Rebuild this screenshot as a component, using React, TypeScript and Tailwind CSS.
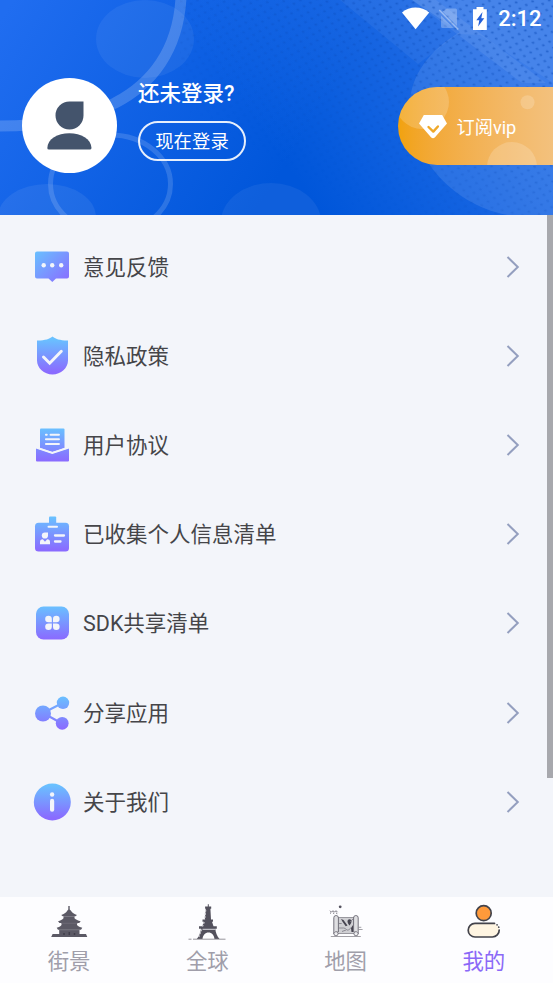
import React from "react"

const textColor = "text-[#454549]"

const Gradient = ({ id, diagonal = false }: { id: string; diagonal?: boolean }) => (
	<defs>
		<linearGradient id={id} gradientUnits="userSpaceOnUse" x1={diagonal ? 4 : 20} y1="5" x2={diagonal ? 36 : 20} y2="38">
			<stop offset="0" stopColor="#69c1ff" />
			<stop offset="1" stopColor="#8a6bff" />
		</linearGradient>
	</defs>
)

const FeedbackIcon = () => (
	<svg className="h-11 w-10" viewBox="0 0 40 44">
		<Gradient id="feedback" diagonal />
		<path d="M5 6.5h30a2 2 0 0 1 2 2v23a2 2 0 0 1-2 2H24L20.3 37 16.500 33.500H5a2 2 0 0 1-2-2v-23a2 2 0 0 1 2-2Z" fill="url(#feedback)" />
		<g fill="#f3f5fa">
			<circle cx="11.700" cy="20.200" r="2.200" />
			<circle cx="20.200" cy="20.200" r="2.200" />
			<circle cx="29.200" cy="20.200" r="2.200" />
		</g>
	</svg>
)

const PrivacyIcon = () => (
	<svg className="h-11 w-10" viewBox="0 0 40 44">
		<Gradient id="privacy" />
		<path d="M20.500 2.500C23 5 29 6.700 36 6.500v20C36 34 29 40.500 20.500 40.500S5 34 5 26.500v-20C12 6.700 18 5 20.500 2.500Z" fill="url(#privacy)" />
		<path d="m11.500 23 6.200 6.200L29.300 17.300" fill="none" stroke="#f3f5fa" strokeWidth="3" strokeLinecap="round" />
	</svg>
)

const AgreementIcon = () => (
	<svg className="h-11 w-10" viewBox="0 0 40 44">
		<Gradient id="agreement" />
		<path d="M8 6.500a1 1 0 0 1 1-1h22.500a1 1 0 0 1 1 1V25l-12.200 4L8 25Z" fill="url(#agreement)" />
		<path d="M4 25.500 20.300 31 37 25.500v12a1 1 0 0 1-1 1H5a1 1 0 0 1-1-1Z" fill="url(#agreement)" />
		<path d="M4 24.300 20.300 29.800 37 24.300" fill="none" stroke="#f3f5fa" strokeWidth="1.500" />
		<path d="M13.900 11.700h.9M18.500 11.700h8.500M13.900 16.300H27M13.900 21H27" stroke="#f3f5fa" strokeWidth="1.900" strokeLinecap="round" />
	</svg>
)

const PersonalInfoIcon = () => (
	<svg className="h-11 w-10" viewBox="0 0 40 44">
		<Gradient id="personal" />
		<rect x="17" y="4.500" width="7.200" height="12" rx="1" fill="url(#personal)" />
		<rect x="3" y="10.800" width="34" height="28.700" rx="3.500" fill="url(#personal)" />
		<path d="M16.500 14.700h8.500" stroke="#f3f5fa" strokeWidth="2" strokeLinecap="round" />
		<path d="M9.800 23.500a3.100 3.100 0 0 1 3.100-3.100H16v3.100a3.100 3.100 0 0 1-6.200 0Z" fill="#f3f5fa" />
		<path d="M8 32.300v-2.300a2.800 2.800 0 0 1 2.800-2.800l2.200 2.600 2.200-2.600A2.800 2.800 0 0 1 18 30v2.300Z" fill="#f3f5fa" />
		<path d="M23 23.500h9M23 29.500h5.500" stroke="#f3f5fa" strokeWidth="2.300" strokeLinecap="round" />
	</svg>
)

const SdkIcon = () => (
	<svg className="h-11 w-10" viewBox="0 0 40 44">
		<Gradient id="sdk" />
		<rect x="4" y="5.500" width="33" height="33" rx="7.500" fill="url(#sdk)" />
		<g fill="#f3f5fa">
			<path d="M19.800 21.300h-3.300a3.300 3.300 0 1 1 3.300-3.300Z" />
			<path d="M21 21.300V18a3.300 3.300 0 1 1 3.300 3.300Z" />
			<path d="M19.800 22.500v3.300a3.300 3.300 0 1 1-3.300-3.300Z" />
			<path d="M21 22.500h3.300a3.300 3.300 0 1 1-3.300 3.300Z" />
		</g>
	</svg>
)

const ShareIcon = () => (
	<svg className="h-11 w-10" viewBox="0 0 40 44">
		<Gradient id="share" />
		<path d="M30.500 12 11 22l19 10.500" fill="none" stroke="url(#share)" strokeWidth="2.200" />
		<g fill="url(#share)">
			<circle cx="11" cy="22.500" r="8" />
			<circle cx="31" cy="11.800" r="6.200" />
			<circle cx="30.200" cy="32.300" r="6.400" />
		</g>
	</svg>
)

const AboutIcon = () => (
	<svg className="h-11 w-10" viewBox="0 0 40 44">
		<Gradient id="about" />
		<circle cx="20.300" cy="22" r="18.500" fill="url(#about)" />
		<circle cx="20.100" cy="14.500" r="2.200" fill="#f3f5fa" />
		<path d="M20.100 20.900v8.800" stroke="#f3f5fa" strokeWidth="4.200" strokeLinecap="round" />
	</svg>
)

const StreetIcon = () => (
	<svg className="h-[38px] w-11" viewBox="0 0 44 38">
		<g fill="#5b5965">
			<path d="M21.300 3h1.400v3.500l1.300 1.300c1.200 2.200 3.200 3.300 6 4.200l-1.500 1.200H15.700L14.200 12c2.800-.9 4.800-2 6-4.200l1.100-1.300Z" />
			<path d="M16.500 13.200h11v2c1.500 1.500 3.500 2.400 6.200 3l-1.500 1.800H12.500L11 18.200c2.500-.6 4.300-1.500 5.500-3Z" />
			<path d="M14.500 20h15.500v2c1.300 1.400 3 2.200 5.300 2.700L34 26.800H11L9.700 24.700c2.200-.5 3.700-1.300 4.800-2.700Z" />
			<path d="M12.200 26.500h20.300V31H39l1.300 3H4.200l1.400-3h6.600Z" />
		</g>
		<path d="M17 13.500h10.500M14 20.300h17M13 27h19" stroke="#7c7a85" strokeWidth=".5" />
		<path d="M17 30v2M22.300 29v3M27.500 30v2" stroke="#403e4a" strokeWidth="1.500" />
	</svg>
)

const GlobeIcon = () => (
	<svg className="h-[38px] w-11" viewBox="0 0 44 38">
		<path
			d="M22.800 1.300h1v2.300h2.400v2.200h-.8l.6 10.700h2v2.200h-1l1.500 4.600h3.300v2.500h-1.500c.4 4 1.700 7.500 4.200 10.200h-5c-.5-4-2.700-6.500-6-6.500s-5.500 2.500-6 6.500h-5.700c2.500-2.700 3.700-6.200 4.200-10.200h-2v-2.500h3.300l1.500-4.600h-1.300v-2.200h2.300l1-10.700h-.7V3.600h2.700Z"
			fill="#53515d"
		/>
		<path d="m20.700 7-1 9.500M19.200 19l-1.700 4.500M16.500 26.500 13.500 35" stroke="#d4d3d8" strokeWidth="1.200" strokeDasharray="1.800 1.300" />
		<path d="M17.500 26.300h12.800" stroke="#fdfdff" strokeWidth=".8" />
		<path d="M3.500 36.200h3M8 36.200h32.500" stroke="#8b8991" strokeWidth=".9" />
	</svg>
)

const MapIcon = () => (
	<svg className="h-[38px] w-11" viewBox="0 0 44 38">
		<circle cx="16.200" cy="3.800" r="1.400" fill="#55535f" />
		<path d="m6 7.700 1.500 1.500L9 7.700l1.500 1.500L12 7.700l1.500 1.500M6 9.700l1 .8M9 9.900l1.200.8M12 9.900l1.300.8" fill="none" stroke="#55535f" strokeWidth=".8" />
		<path d="M13 14.500h18v16H13Z" fill="#cfcfd3" stroke="#77757f" strokeWidth=".7" />
		<path d="M9.800 14.800a2.400 2.400 0 0 1 4.700 0v13.500H9.800Z" fill="#dfdfe2" />
		<path d="M29.700 14.800a2.400 2.400 0 0 1 4.700 0v13.500h-4.700Z" fill="#dfdfe2" />
		<path d="M9.800 31V14.800a2.300 2.300 0 0 1 4.600 0V29M34.200 31V14.800a2.300 2.300 0 0 0-4.600 0V29" fill="none" stroke="#55535f" strokeWidth=".8" />
		<circle cx="12" cy="30.700" r="2.100" fill="#ededf0" stroke="#67656f" strokeWidth=".8" />
		<circle cx="32" cy="30.700" r="2.100" fill="#ededf0" stroke="#67656f" strokeWidth=".8" />
		<path d="m17 16 2.500 1 4 5.500-1.800.7-3-4.200ZM23.500 18.500c0-3 4-3 4 0 0 1.500-2 4-2 4s-2-2.500-2-4ZM29 22l-2 3 .5 4H29Z" fill="#464450" />
		<path d="M14.700 20.500h3M14.700 25h5c3 0 2 3 5 2l3-3M18 28.500l4-1.500M26 19l4-4" fill="none" stroke="#7b7983" strokeWidth=".8" />
		<path d="M6.800 33.500h30M34.300 24.300h3M34.300 26.500h4.300" stroke="#8b8991" strokeWidth=".8" />
	</svg>
)

const MineIcon = () => (
	<svg className="h-[38px] w-11" viewBox="0 0 44 38">
		<circle cx="21.700" cy="10.200" r="7.500" fill="#ff9a3b" stroke="#43434b" strokeWidth="1.700" />
		<rect x="6.200" y="20.400" width="31" height="13.600" rx="6.800" fill="#fff5e2" />
		<path d="M32.500 20.400H13a6.800 6.800 0 0 0 0 13.600h17.400a6.800 6.800 0 0 0 6.800-7" fill="none" stroke="#43434b" strokeWidth="1.700" strokeLinecap="round" />
		<path d="m35 21.800.1.100M36.700 24l.1.300" stroke="#43434b" strokeWidth="1.600" strokeLinecap="round" />
	</svg>
)

const menuItems = [
	{ label: "意见反馈", Icon: FeedbackIcon },
	{ label: "隐私政策", Icon: PrivacyIcon },
	{ label: "用户协议", Icon: AgreementIcon },
	{ label: "已收集个人信息清单", Icon: PersonalInfoIcon },
	{ label: "SDK共享清单", Icon: SdkIcon },
	{ label: "分享应用", Icon: ShareIcon },
	{ label: "关于我们", Icon: AboutIcon },
]

const tabs = [
	{ label: "街景", Icon: StreetIcon, active: false },
	{ label: "全球", Icon: GlobeIcon, active: false },
	{ label: "地图", Icon: MapIcon, active: false },
	{ label: "我的", Icon: MineIcon, active: true },
]

const HeaderBackdrop = () => (
	<svg className="absolute inset-0 h-full w-full" viewBox="0 0 553 215" preserveAspectRatio="none">
		<defs>
			<linearGradient id="sky" gradientUnits="userSpaceOnUse" x1="0" y1="20" x2="270" y2="190">
				<stop offset="0" stopColor="#206df0" />
				<stop offset="1" stopColor="#0056da" />
			</linearGradient>
			<linearGradient id="sky-right" gradientUnits="userSpaceOnUse" x1="290" y1="170" x2="480" y2="30">
				<stop offset="0" stopColor="#226de6" stopOpacity="0" />
				<stop offset="1" stopColor="#266fe7" />
			</linearGradient>
			<pattern id="dots" width="10.500" height="10" patternUnits="userSpaceOnUse" patternTransform="rotate(14)">
				<ellipse cx="2.600" cy="2.500" rx="1.500" ry="1.100" fill="#0a49b5" />
				<ellipse cx="7.900" cy="7.500" rx="1.500" ry="1.100" fill="#0a49b5" />
			</pattern>
			<linearGradient id="fade" x1="0" y1="1" x2="1" y2="0">
				<stop offset=".25" stopColor="#000" />
				<stop offset=".9" stopColor="#888" />
			</linearGradient>
			<mask id="dots-mask">
				<rect x="180" width="373" height="215" fill="url(#fade)" />
			</mask>
		</defs>
		<rect width="553" height="215" fill="url(#sky)" />
		<rect width="553" height="215" fill="url(#sky-right)" />
		<g fill="#fff">
			<ellipse cx="145" cy="39" rx="49" ry="39" fillOpacity=".06" />
			<ellipse cx="47" cy="217" rx="49" ry="33" fillOpacity=".07" />
			<ellipse cx="271" cy="222" rx="50" ry="39" fillOpacity=".06" />
			<path d="M340 0h213v83L480 35l-22-1-40 30Z" fillOpacity=".05" />
			<path d="M460 32C430 50 410 75 410 105c0 48 38 98 97 110h46V0H412Z" fillOpacity=".1" />
			<path d="M412 0h24l110 83h-24Z" fillOpacity=".07" />
		</g>
		<rect x="180" width="373" height="215" fill="url(#dots)" mask="url(#dots-mask)" />
		<g fill="none" stroke="#fff" strokeOpacity=".18">
			<path d="M181-2C178 50 152 84 115 103 85 120 40 126 0 126" strokeWidth="11" />
			<ellipse cx="110.500" cy="184" rx="60" ry="49" strokeWidth="5" strokeOpacity=".15" />
		</g>
	</svg>
)

const StatusBar = () => (
	<div className="flex h-[38px] items-center justify-end pr-[11.500px]">
		<svg className="h-[38px] w-[90px]" viewBox="400 0 90 38">
			<path d="M402 12.500c7.500-6.700 19.500-6.700 27.200 0L415.600 29.200Z" fill="#fff" />
			<path d="M447 8.500h8.500a1.500 1.500 0 0 1 1.500 1.500v16l-14.500-14.500ZM441 15.500 453.500 28h-11a1.500 1.500 0 0 1-1.500-1.500Z" fill="#fff" fillOpacity=".27" />
			<path d="m439.300 10 19 19.500" stroke="#fff" strokeOpacity=".42" strokeWidth="1.600" />
			<path d="M476.500 7h7v2.300h3.300V30h-13.800V9.300h3.500Z" fill="#fff" />
			<path d="m482.500 12-6.200 8.300h3l-1.200 6.200 6.200-8.300h-3Z" fill="#2460d8" />
		</svg>
		<span className="ml-2 text-[22px] leading-[38px] font-medium text-white">2:12</span>
	</div>
)

const VipButton = () => (
	<button className="relative mt-[49px] flex h-[78px] w-[155px] items-center overflow-hidden rounded-l-full bg-linear-to-r from-[#f2a20b] to-[#f3c17d] pl-[21px] text-white">
		<svg className="absolute inset-0 h-full w-full" viewBox="0 0 155 78">
			<g fill="#fff" fillOpacity=".18">
				<circle cx="24" cy="15" r="27" />
				<circle cx="129.500" cy="15.300" r="7" />
				<circle cx="114" cy="80" r="25" />
			</g>
		</svg>
		<svg className="relative mt-0.5 h-6 w-7" viewBox="0 0 28 24">
			<path d="M4.800 0h18.400L28 8.500 16 22.300q-2 2-4 0L0 8.500Z" fill="#fff" />
			<path d="m9.500 12 4.800 4.600 4.600-5.100" fill="none" stroke="#efa829" strokeWidth="2.400" strokeLinecap="round" strokeLinejoin="round" />
		</svg>
		<span className="relative ml-[9.500px] pt-1 text-[18.200px] leading-6 whitespace-nowrap">订阅vip</span>
	</button>
)

const Header = () => (
	<header className="relative h-[215px] shrink-0 overflow-hidden">
		<HeaderBackdrop />
		<div className="relative">
			<StatusBar />
			<div className="flex items-start pl-[21.500px]">
				<div className="mt-10 size-[95px] rounded-full bg-white">
					<svg className="size-full" viewBox="0 0 95 95">
						<path d="M47.500 23.500H61.500v14a14 14 0 1 1-14-14Z" fill="#44546c" />
						<path d="M27 71.500q-1.700 0-1.700-1.600C25.700 61 35.500 55.300 47.300 55.300S69 61 69.500 69.900q0 1.600-1.700 1.600Z" fill="#44546c" />
					</svg>
				</div>
				<div className="mt-[41px] ml-[21.500px] flex-1 text-white">
					<p className="text-[21.500px] leading-[30px] font-medium">还未登录?</p>
					<button className="mt-3 flex h-10 w-[108px] items-center justify-center rounded-full border-2 border-white/90 pt-0.5 text-[18.400px]">
						现在登录
					</button>
				</div>
				<VipButton />
			</div>
		</div>
	</header>
)

export default function App() {
	return (
		<div className="flex h-[983px] w-[553px] flex-col overflow-hidden bg-[#f3f5fa] font-[Roboto,'Noto_Sans_CJK_SC',sans-serif]">
			<Header />
			<main className="flex flex-1 justify-between">
				<ul className="flex-1 pt-[7.500px]">
					{menuItems.map(({ label, Icon }) => (
						<li key={label} className="flex h-[89.100px] items-center pr-[27px] pl-8">
							<Icon />
							<span className={`ml-[11px] flex-1 pt-0.5 text-[21.500px] leading-8 ${textColor}`}>{label}</span>
							<svg className="h-6 w-[14px]" viewBox="0 0 14 24">
								<path d="m1.500 2 10.300 10L1.500 22" fill="none" stroke="#949fbf" strokeWidth="2" />
							</svg>
						</li>
					))}
				</ul>
				<div className="h-[563px] w-1.5 bg-[#a7a8ad]" />
			</main>
			<nav className="flex h-[86px] shrink-0 bg-[#fdfdff]">
				{tabs.map(({ label, Icon, active }) => (
					<div key={label} className="flex flex-1 flex-col items-center pt-1.5">
						<Icon />
						<span className={`mt-[5px] text-[21.400px] leading-8 ${active ? "text-[#8b69f7]" : "text-[#a09eaa]"}`}>{label}</span>
					</div>
				))}
			</nav>
		</div>
	)
}
